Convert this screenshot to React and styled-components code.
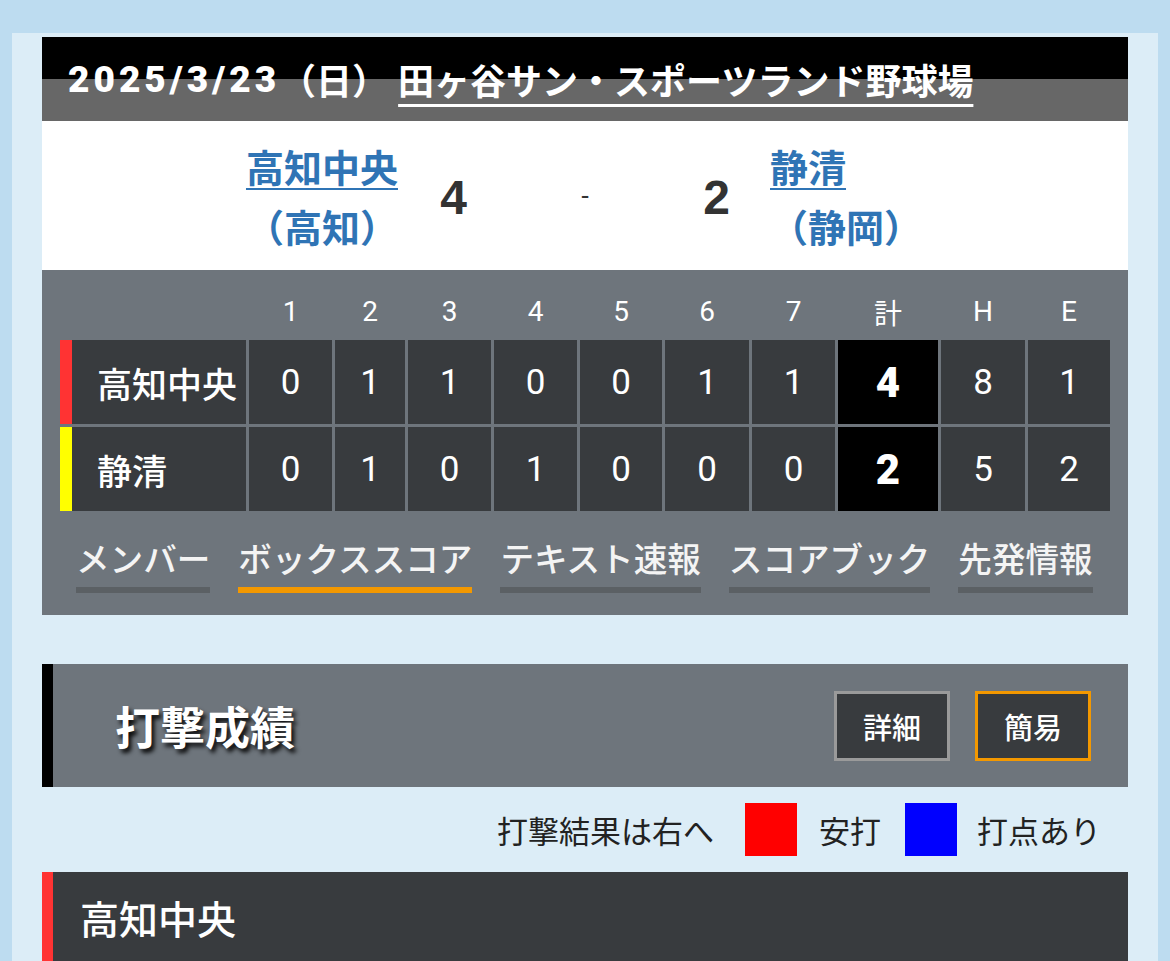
import styled, { createGlobalStyle } from "styled-components";

const GlobalStyle = createGlobalStyle`
  body {
    margin: 0;
    background: #bddcf0;
    font-family: "Noto Sans CJK JP", sans-serif;
  }
`;

const Page = styled.div`
  padding-top: 33px;
`;

const Container = styled.div`
  margin: 0 12px;
  background: #dcedf7;
  padding: 4px 30px 0;
  min-height: 940px;
`;

const GameHeader = styled.header`
  height: 84px;
  display: flex;
  align-items: center;
  padding-left: 26px;
  background: linear-gradient(#000 50%, #676767 50%);
  color: #fff;
  font-weight: 700;
  font-size: 36px;
`;

const GameDate = styled.span`
  font-family: "Roboto", "Noto Sans CJK JP", sans-serif;
  font-size: 37px;
  font-weight: 900;
  letter-spacing: 4px;
`;

const Venue = styled.a`
  margin-left: 10px;
  color: #fff;
  text-decoration: underline;
  text-decoration-thickness: 3px;
  text-underline-offset: 9px;
`;

const Matchup = styled.div`
  background: #fff;
  height: 149px;
  display: grid;
  grid-template-columns: 160px 103px 160px 103px 1fr;
  align-items: center;
  padding-left: 200px;
  box-sizing: border-box;
`;

const Team = styled.div`
  display: flex;
  flex-direction: column;
  align-items: ${(p) => (p.$align === "left" ? "flex-start" : "center")};
  padding-left: ${(p) => (p.$align === "left" ? "2px" : "0")};
  color: #2f74b5;
  font-size: 38px;
  font-weight: 700;
  line-height: 60px;
  white-space: nowrap;
  margin-top: 1px;

  a {
    color: inherit;
    text-decoration: underline;
    text-decoration-thickness: 2px;
    text-underline-offset: 6px;
  }
`;

const Score = styled.div`
  justify-self: center;
  font-family: "Liberation Sans", sans-serif;
  font-size: 48px;
  font-weight: 700;
  color: #333;
  margin-top: 4px;
`;

const Dash = styled.div`
  justify-self: center;
  font-family: "Liberation Sans", sans-serif;
  font-size: 26px;
  color: #333;
`;

const Board = styled.div`
  background: #6e757c;
  padding: 20px 18px 22px;
`;

const Innings = styled.div`
  display: grid;
  grid-template-columns: 186px 83px 70px 83px 83px 82px 84px 83px 100px 84px 82px;
  grid-template-rows: 47px 84px 84px;
  gap: 3px;
`;

const HeadCell = styled.div`
  display: flex;
  align-items: center;
  justify-content: center;
  color: #fff;
  font-family: "Roboto", "Noto Sans CJK JP", sans-serif;
  font-size: 28px;
  padding-bottom: 4px;
`;

const NameCell = styled.div`
  display: flex;
  align-items: center;
  background: #383b3e;
  border-left: 12px solid ${(p) => p.$color};
  padding-left: 25px;
  color: #fff;
  font-size: 35px;
  font-weight: 500;
`;

const RunCell = styled.div`
  display: flex;
  align-items: center;
  justify-content: center;
  background: ${(p) => (p.$total ? "#000" : "#383b3e")};
  color: #fff;
  font-family: "Roboto", sans-serif;
  font-size: ${(p) => (p.$total ? "42px" : "35px")};
  font-weight: ${(p) => (p.$total ? 900 : 400)};
`;

const Tabs = styled.nav`
  display: flex;
  gap: 28px;
  margin-top: 27px;
  padding-left: 16px;
`;

const Tab = styled.div`
  display: flex;
  flex-direction: column;
  color: #f4f4f4;
  font-size: 33.6px;
  font-weight: 500;
  line-height: 40px;

  &::after {
    content: "";
    height: 6px;
    margin-top: 9px;
    background: ${(p) => (p.$active ? "#f39800" : "#5b6064")};
  }
`;

const SectionHeader = styled.div`
  margin-top: 49px;
  height: 123px;
  background: #6e757c;
  border-left: 11px solid #000;
  display: flex;
  align-items: center;
  justify-content: space-between;
  padding: 0 37px 0 62px;
`;

const SectionTitle = styled.h2`
  margin: 0;
  color: #fff;
  font-size: 45px;
  font-weight: 700;
  text-shadow: 3px 4px 4px rgba(0, 0, 0, 0.9);
`;

const ModeButtons = styled.div`
  display: flex;
  gap: 25px;
`;

const ModeButton = styled.button`
  width: 116px;
  height: 70px;
  box-sizing: border-box;
  border: 3px solid ${(p) => (p.$active ? "#f39800" : "#9a9a9a")};
  background: #383b3e;
  color: #fff;
  font-family: "Noto Sans CJK JP", sans-serif;
  font-size: 29px;
  font-weight: 500;
  padding: 0;
`;

const Legend = styled.div`
  height: 85px;
  display: flex;
  align-items: center;
  justify-content: flex-end;
  padding-right: 27px;
  color: #222;
  font-size: 31px;
`;

const Swatch = styled.span`
  width: 52px;
  height: 53px;
  background: ${(p) => p.$color};
  margin: 0 ${(p) => p.$after}px 0 ${(p) => p.$before}px;
`;

const TeamBar = styled.div`
  height: 90px;
  background: #383b3e;
  border-left: 11px solid #ff3333;
  display: flex;
  align-items: center;
  padding-left: 27px;
  color: #fff;
  font-size: 39px;
  font-weight: 500;
`;

const headers = ["", "1", "2", "3", "4", "5", "6", "7", "計", "H", "E"];

const lines = [
  { name: "高知中央", color: "#ff3333", runs: [0, 1, 1, 0, 0, 1, 1], total: 4, hits: 8, errors: 1 },
  { name: "静清", color: "#ffff00", runs: [0, 1, 0, 1, 0, 0, 0], total: 2, hits: 5, errors: 2 },
];

const tabs = ["メンバー", "ボックススコア", "テキスト速報", "スコアブック", "先発情報"];

export default function App() {
  return (
    <Page>
      <GlobalStyle />
      <Container>
        <GameHeader>
          <GameDate>2025/3/23</GameDate>（日）
          <Venue href="#">田ヶ谷サン・スポーツランド野球場</Venue>
        </GameHeader>

        <Matchup>
          <Team>
            <a href="#">高知中央</a>
            <span>（高知）</span>
          </Team>
          <Score>4</Score>
          <Dash>-</Dash>
          <Score>2</Score>
          <Team $align="left">
            <a href="#">静清</a>
            <span>（静岡）</span>
          </Team>
        </Matchup>

        <Board>
          <Innings>
            {headers.map((h, i) => (
              <HeadCell key={i}>{h}</HeadCell>
            ))}
            {lines.map((line) => [
              <NameCell key={line.name} $color={line.color}>
                {line.name}
              </NameCell>,
              ...line.runs.map((r, i) => <RunCell key={line.name + i}>{r}</RunCell>),
              <RunCell key={line.name + "t"} $total>
                {line.total}
              </RunCell>,
              <RunCell key={line.name + "h"}>{line.hits}</RunCell>,
              <RunCell key={line.name + "e"}>{line.errors}</RunCell>,
            ])}
          </Innings>

          <Tabs>
            {tabs.map((t) => (
              <Tab key={t} $active={t === "ボックススコア"}>
                {t}
              </Tab>
            ))}
          </Tabs>
        </Board>

        <SectionHeader>
          <SectionTitle>打撃成績</SectionTitle>
          <ModeButtons>
            <ModeButton>詳細</ModeButton>
            <ModeButton $active>簡易</ModeButton>
          </ModeButtons>
        </SectionHeader>

        <Legend>
          打撃結果は右へ
          <Swatch $color="#ff0000" $before={31} $after={22} />
          安打
          <Swatch $color="#0000ff" $before={24} $after={20} />
          打点あり
        </Legend>

        <TeamBar>高知中央</TeamBar>
      </Container>
    </Page>
  );
}
